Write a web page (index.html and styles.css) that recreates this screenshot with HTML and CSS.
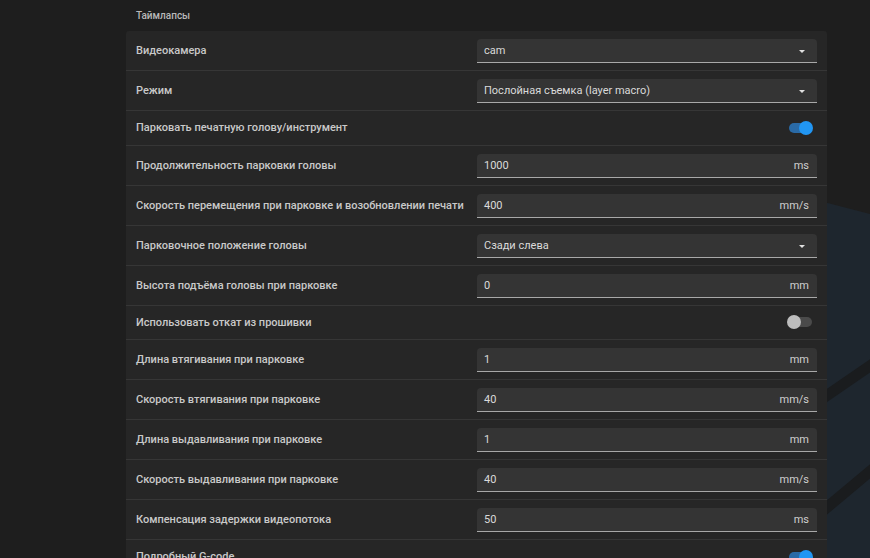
FILE: index.html
```html
<!DOCTYPE html>
<html lang="ru">
<head>
<meta charset="utf-8">
<title>Таймлапсы</title>
<link rel="stylesheet" href="styles.css">
</head>
<body>
<svg class="backdrop" width="870" height="558" viewBox="0 0 870 558" aria-hidden="true">
  <polygon points="700,170 870,214 870,558 700,558" fill="#1e262e"/>
  <line x1="800" y1="414" x2="880" y2="359" stroke="#1a1c1e" stroke-width="11"/>
  <line x1="800" y1="530" x2="880" y2="463" stroke="#1a1c1e" stroke-width="11"/>
</svg>
<main class="page">
  <h2 class="title">Таймлапсы</h2>
  <section class="panel">
    <div class="row">
      <span class="label">Видеокамера</span>
      <div class="field select"><span class="value">cam</span><span class="caret"></span></div>
    </div>
    <div class="row">
      <span class="label">Режим</span>
      <div class="field select"><span class="value">Послойная съемка (layer macro)</span><span class="caret"></span></div>
    </div>
    <div class="row row-switch">
      <span class="label">Парковать печатную голову/инструмент</span>
      <span class="switch on"><span class="track"></span><span class="thumb"></span></span>
    </div>
    <div class="row">
      <span class="label">Продолжительность парковки головы</span>
      <div class="field"><span class="value">1000</span><span class="unit">ms</span></div>
    </div>
    <div class="row">
      <span class="label">Скорость перемещения при парковке и возобновлении печати</span>
      <div class="field"><span class="value">400</span><span class="unit">mm/s</span></div>
    </div>
    <div class="row">
      <span class="label">Парковочное положение головы</span>
      <div class="field select"><span class="value">Сзади слева</span><span class="caret"></span></div>
    </div>
    <div class="row">
      <span class="label">Высота подъёма головы при парковке</span>
      <div class="field"><span class="value">0</span><span class="unit">mm</span></div>
    </div>
    <div class="row row-switch">
      <span class="label">Использовать откат из прошивки</span>
      <span class="switch off"><span class="track"></span><span class="thumb"></span></span>
    </div>
    <div class="row">
      <span class="label">Длина втягивания при парковке</span>
      <div class="field"><span class="value">1</span><span class="unit">mm</span></div>
    </div>
    <div class="row">
      <span class="label">Скорость втягивания при парковке</span>
      <div class="field"><span class="value">40</span><span class="unit">mm/s</span></div>
    </div>
    <div class="row">
      <span class="label">Длина выдавливания при парковке</span>
      <div class="field"><span class="value">1</span><span class="unit">mm</span></div>
    </div>
    <div class="row">
      <span class="label">Скорость выдавливания при парковке</span>
      <div class="field"><span class="value">40</span><span class="unit">mm/s</span></div>
    </div>
    <div class="row">
      <span class="label">Компенсация задержки видеопотока</span>
      <div class="field"><span class="value">50</span><span class="unit">ms</span></div>
    </div>
    <div class="row row-switch">
      <span class="label">Подробный G-code</span>
      <span class="switch on"><span class="track"></span><span class="thumb"></span></span>
    </div>
  </section>
</main>
</body>
</html>
```

FILE: styles.css
```css
html, body {
  margin: 0;
  padding: 0;
  background: #1e1e1e;
  height: 100%;
  overflow: hidden;
}

body {
  font-family: Roboto, "Liberation Sans", Arial, sans-serif;
  color: #c8c8c8;
  position: relative;
}

.backdrop {
  position: absolute;
  left: 0;
  top: 0;
  z-index: 0;
}

.page {
  position: relative;
  z-index: 1;
  width: 701px;
  margin-left: 126px;
}

.title {
  margin: 0;
  height: 31px;
  padding-left: 10px;
  display: flex;
  align-items: center;
  font-size: 10px;
  font-weight: 500;
  color: #b8b8b8;
  box-sizing: border-box;
}

.panel {
  background: #262626;
  border-radius: 3px 3px 0 0;
}

.row {
  display: grid;
  grid-template-columns: 341px 340px;
  align-items: center;
  height: 40px;
  box-sizing: border-box;
  border-bottom: 1px solid #363636;
  padding: 0 10px;
}

.row-switch {
  height: 34.5px;
}

.label {
  font-size: 11px;
  font-weight: 500;
  color: #c9c9c9;
  white-space: nowrap;
}

.field {
  height: 24px;
  margin-top: 1px;
  box-sizing: border-box;
  background: #343434;
  border-radius: 4px 4px 0 0;
  border-bottom: 1px solid #a8a8a8;
  display: flex;
  align-items: center;
  justify-content: space-between;
  padding: 0 8px 0 7px;
  font-size: 11px;
  color: #dadada;
}

.unit {
  color: #cfcfcf;
}

.caret {
  width: 0;
  height: 0;
  border-left: 3.5px solid transparent;
  border-right: 3.5px solid transparent;
  border-top: 3.5px solid #e0e0e0;
  margin-right: 4px;
  margin-top: 2px;
}

.switch {
  justify-self: end;
  margin-right: 4px;
  position: relative;
  width: 26px;
  height: 14px;
}

.switch .track {
  position: absolute;
  left: 2px;
  right: 1px;
  top: 2px;
  height: 10px;
  border-radius: 5px;
}

.switch .thumb {
  position: absolute;
  top: 0;
  width: 14px;
  height: 14px;
  border-radius: 50%;
}

.switch.on .track {
  background: #2a6aa6;
}

.switch.on .thumb {
  right: 0;
  background: #2196f3;
}

.switch.off .track {
  background: #4a4a4a;
}

.switch.off .thumb {
  left: 0;
  background: #bdbdbd;
}
```
